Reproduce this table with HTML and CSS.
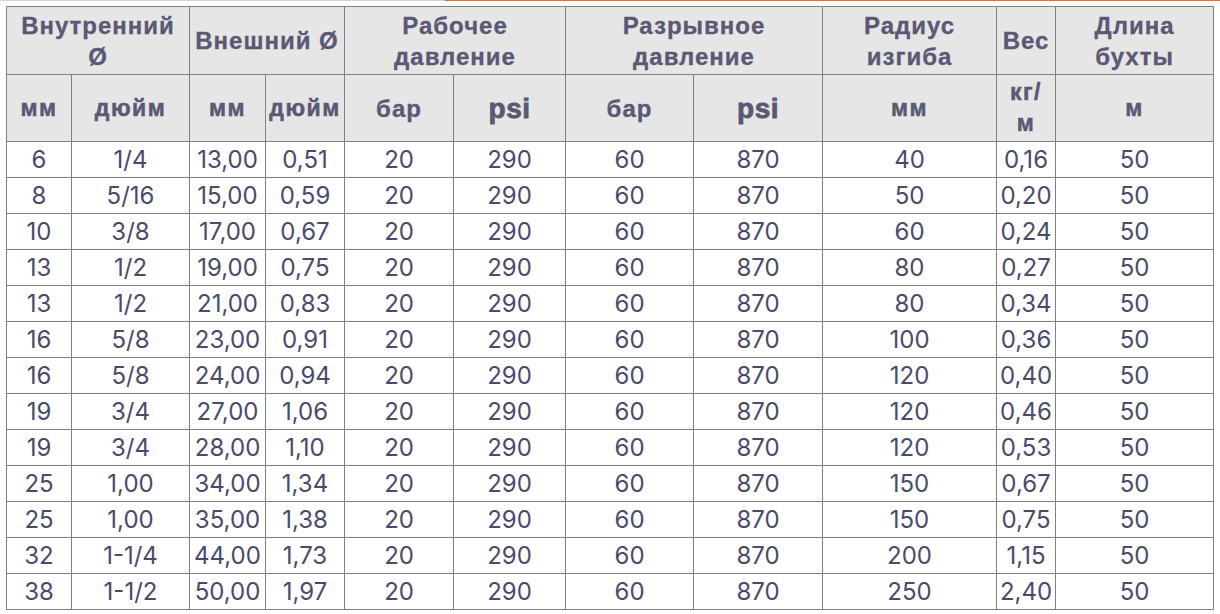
FILE: index.html
```html
<!DOCTYPE html>
<html lang="ru">
<head>
<meta charset="utf-8">
<title>Таблица</title>
<link rel="stylesheet" href="styles.css">
</head>
<body>
<div class="topbar"><div class="topbar-gray"></div><div class="topbar-orange"></div></div>
<table class="spec">
<colgroup>
<col class="c1"><col class="c2"><col class="c3"><col class="c4"><col class="c5"><col class="c6"><col class="c7"><col class="c8"><col class="c9"><col class="c10"><col class="c11">
</colgroup>
<thead>
<tr class="h1">
<th colspan="2">Внутренний<br>Ø</th>
<th colspan="2">Внешний Ø</th>
<th colspan="2">Рабочее<br>давление</th>
<th colspan="2">Разрывное<br>давление</th>
<th>Радиус<br>изгиба</th>
<th>Вес</th>
<th>Длина<br>бухты</th>
</tr>
<tr class="h2">
<th class="u">мм</th><th class="u">дюйм</th><th class="u">мм</th><th class="u">дюйм</th>
<th>бар</th><th class="psi">psi</th><th>бар</th><th class="psi">psi</th>
<th class="u">мм</th><th class="u">кг/<br>м</th><th class="u">м</th>
</tr>
</thead>
<tbody>
<tr><td>6</td><td>1/4</td><td>13,00</td><td>0,51</td><td>20</td><td>290</td><td>60</td><td>870</td><td>40</td><td>0,16</td><td>50</td></tr>
<tr><td>8</td><td>5/16</td><td>15,00</td><td>0,59</td><td>20</td><td>290</td><td>60</td><td>870</td><td>50</td><td>0,20</td><td>50</td></tr>
<tr><td>10</td><td>3/8</td><td>17,00</td><td>0,67</td><td>20</td><td>290</td><td>60</td><td>870</td><td>60</td><td>0,24</td><td>50</td></tr>
<tr><td>13</td><td>1/2</td><td>19,00</td><td>0,75</td><td>20</td><td>290</td><td>60</td><td>870</td><td>80</td><td>0,27</td><td>50</td></tr>
<tr><td>13</td><td>1/2</td><td>21,00</td><td>0,83</td><td>20</td><td>290</td><td>60</td><td>870</td><td>80</td><td>0,34</td><td>50</td></tr>
<tr><td>16</td><td>5/8</td><td>23,00</td><td>0,91</td><td>20</td><td>290</td><td>60</td><td>870</td><td>100</td><td>0,36</td><td>50</td></tr>
<tr><td>16</td><td>5/8</td><td>24,00</td><td>0,94</td><td>20</td><td>290</td><td>60</td><td>870</td><td>120</td><td>0,40</td><td>50</td></tr>
<tr><td>19</td><td>3/4</td><td>27,00</td><td>1,06</td><td>20</td><td>290</td><td>60</td><td>870</td><td>120</td><td>0,46</td><td>50</td></tr>
<tr><td>19</td><td>3/4</td><td>28,00</td><td>1,10</td><td>20</td><td>290</td><td>60</td><td>870</td><td>120</td><td>0,53</td><td>50</td></tr>
<tr><td>25</td><td>1,00</td><td>34,00</td><td>1,34</td><td>20</td><td>290</td><td>60</td><td>870</td><td>150</td><td>0,67</td><td>50</td></tr>
<tr><td>25</td><td>1,00</td><td>35,00</td><td>1,38</td><td>20</td><td>290</td><td>60</td><td>870</td><td>150</td><td>0,75</td><td>50</td></tr>
<tr><td>32</td><td>1-1/4</td><td>44,00</td><td>1,73</td><td>20</td><td>290</td><td>60</td><td>870</td><td>200</td><td>1,15</td><td>50</td></tr>
<tr><td>38</td><td>1-1/2</td><td>50,00</td><td>1,97</td><td>20</td><td>290</td><td>60</td><td>870</td><td>250</td><td>2,40</td><td>50</td></tr>
</tbody>
</table>
</body>
</html>
```

FILE: styles.css
```css
html, body {
  margin: 0;
  padding: 0;
  background: #ffffff;
}
body {
  width: 1220px;
  height: 614px;
  overflow: hidden;
}
.topbar {
  display: flex;
  height: 1px;
}
.topbar-gray {
  width: 445px;
  background: #d4d4d4;
}
.topbar-orange {
  flex: 1;
  background: #f26a21;
}
.spec {
  margin: 5px 0 0 6px;
  width: 1208px;
  table-layout: fixed;
  border-collapse: collapse;
  color: #4a4a6a;
}
.c1 { width: 65px; }
.c2 { width: 118px; }
.c3 { width: 76px; }
.c4 { width: 79px; }
.c5 { width: 109px; }
.c6 { width: 112px; }
.c7 { width: 128px; }
.c8 { width: 129px; }
.c9 { width: 174px; }
.c10 { width: 59px; }
.c11 { width: 158px; }
.spec th, .spec td {
  border: 1px solid #808080;
  padding: 0;
  text-align: center;
  vertical-align: middle;
}
.spec th {
  background: #e6e6e6;
  color: #5a5874;
  font-family: "Liberation Sans", Arial, sans-serif;
  font-weight: bold;
  font-size: 24px;
  line-height: 31px;
  letter-spacing: 1px;
  -webkit-text-stroke: 0.3px #5a5874;
}
.spec .h1 { height: 68px; }
.spec .h2 { height: 67px; }
.spec th.psi {
  font-size: 28px;
  letter-spacing: 0.5px;
  -webkit-text-stroke: 0.8px #5a5874;
}
.spec th.u {
  font-size: 23px;
  letter-spacing: 1.5px;
  -webkit-text-stroke: 0.5px #5a5874;
}
.spec td {
  height: 35px;
  font-family: Inter, "Noto Sans", sans-serif;
  font-weight: 400;
  font-size: 24px;
  line-height: 28px;
  color: #4a4a6a;
}
```
